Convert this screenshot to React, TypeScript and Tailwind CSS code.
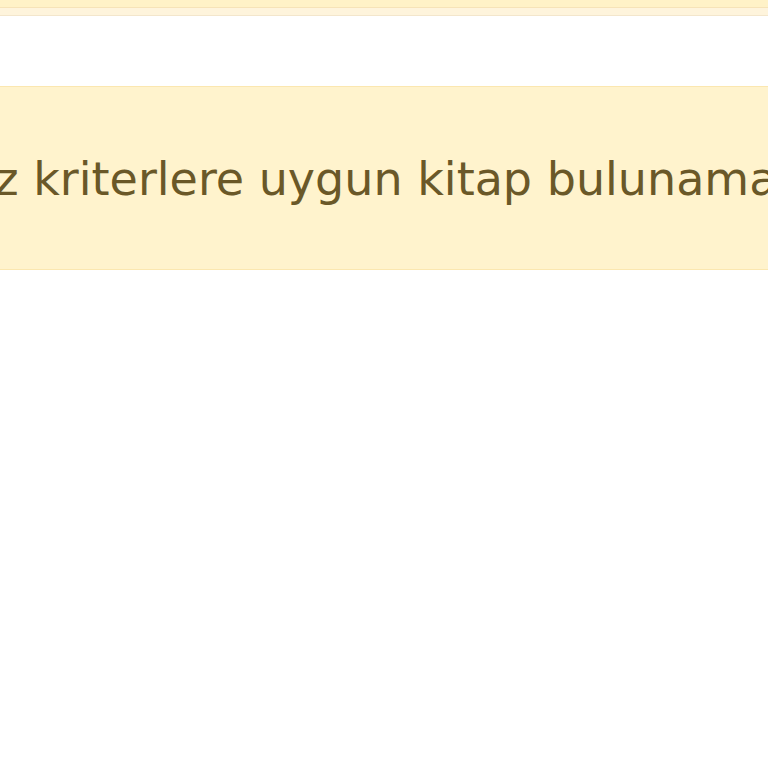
export default function App() {
  return (
    <div className="min-h-screen bg-white overflow-hidden" style={{ fontFamily: '"DejaVu Sans", sans-serif' }}>
      <div className="h-[8px] bg-[#fff2c7] border-b border-[#f6e3b8]" />
      <div className="h-[8px] bg-[#fef4dc] border-b border-[#f3e6cc]" />
      <div className="mt-[70px] bg-[#fff3cd] border-y border-[#fbe7b0] h-[184px] flex items-center overflow-hidden">
        <p className="whitespace-nowrap text-[46px] text-[#6a5828] -ml-[210px] pt-[2px]">
          Aradığınız kriterlere uygun kitap bulunamadı.
        </p>
      </div>
    </div>
  )
}
